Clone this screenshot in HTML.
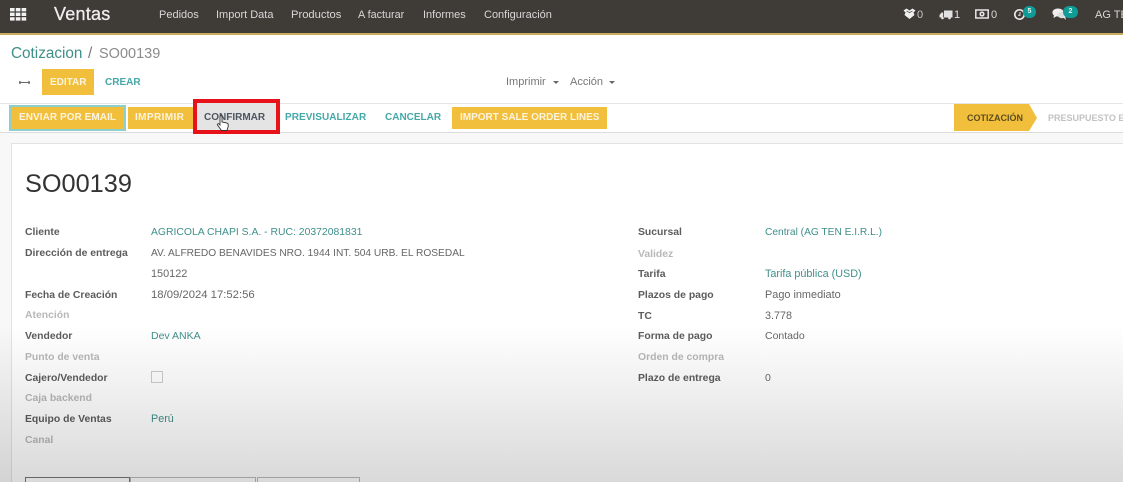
<!DOCTYPE html>
<html><head><meta charset="utf-8"><style>
html,body{margin:0;padding:0;width:1123px;height:482px;overflow:hidden}
#p{position:relative;width:1123px;height:482px;overflow:hidden;background:#fff;font-family:"Liberation Sans",sans-serif;font-size:11px;color:#555}
.a{position:absolute;white-space:nowrap;line-height:14px}
.n{color:#d8d8d8;top:7.5px;font-size:11px}
.l{left:25px;font-weight:bold;color:#5c5c5c;font-size:10.4px}
.t{color:#3f8f8a;font-size:10.5px}
.g{color:#666;font-size:10.5px}
.q{color:#b8b8b8!important}
.b{font-weight:bold;font-size:10px;color:#fdf4de}
.y{position:absolute;background:#f1bf3c}
.c{color:#45a8a8;font-weight:bold;font-size:10px}
.r{left:638px;font-weight:bold;color:#5c5c5c;font-size:10.4px}
.v{left:765px}
</style></head><body><div id="p">
<div class="a" style="left:0;top:0;width:1123px;height:33px;background:#3f3b37;border-bottom:2px solid #c9ab5e"></div>
<svg class="a" style="left:10px;top:8px" width="17" height="13"><g fill="#f2f2f2"><rect x="0" y="0" width="4.6" height="3.4"/><rect x="5.8" y="0" width="4.6" height="3.4"/><rect x="11.6" y="0" width="4.6" height="3.4"/><rect x="0" y="4.6" width="4.6" height="3.4"/><rect x="5.8" y="4.6" width="4.6" height="3.4"/><rect x="11.6" y="4.6" width="4.6" height="3.4"/><rect x="0" y="9.2" width="4.6" height="3.4"/><rect x="5.8" y="9.2" width="4.6" height="3.4"/><rect x="11.6" y="9.2" width="4.6" height="3.4"/></g></svg>
<div class="a" style="left:54px;top:4px;font-size:18px;line-height:20px;color:#eee;letter-spacing:.25px;-webkit-text-stroke:.3px #eee">Ventas</div>
<div class="a n" style="left:159px">Pedidos</div>
<div class="a n" style="left:216px">Import Data</div>
<div class="a n" style="left:291px;font-size:11.2px">Productos</div>
<div class="a n" style="left:358px;font-size:10.8px">A facturar</div>
<div class="a n" style="left:423px">Informes</div>
<div class="a n" style="left:484px">Configuración</div>

<svg class="a" style="left:903px;top:8px" width="13" height="12"><path d="M0.5 2.5 L3.5 0.5 L6.5 2.5 L9.5 0.5 L12.5 2.5 L10.5 4.5 L11.5 7 L6.5 11 L1.5 7 L2.5 4.5Z" fill="#efefef"/><path d="M3.5 3 L6.5 4.6 L9.5 3" stroke="#3f3b37" stroke-width=".7" fill="none"/></svg>
<div class="a n" style="left:917px;color:#c8c8c8">0</div>
<svg class="a" style="left:939px;top:9px" width="14" height="11"><path d="M5 1.5 H13.5 V8.5 H5Z M4.2 3.5 H2.5 L0.5 6 V8.5 H4.2Z" fill="#e2e2e2"/><circle cx="3.5" cy="9" r="1.3" fill="#e2e2e2"/><circle cx="10.5" cy="9" r="1.3" fill="#e2e2e2"/></svg>
<div class="a n" style="left:954px;color:#e2e2e2">1</div>
<svg class="a" style="left:975px;top:9px" width="14" height="10"><rect x=".8" y="1" width="12.4" height="8" fill="none" stroke="#e6e6e6" stroke-width="1.5"/><circle cx="7" cy="5" r="2.6" fill="#e6e6e6"/><circle cx="7" cy="5" r="1" fill="#3f3b37"/></svg>
<div class="a n" style="left:991px">0</div>
<svg class="a" style="left:1013px;top:7px" width="14" height="14"><circle cx="6.5" cy="7.5" r="4.7" fill="none" stroke="#e6e6e6" stroke-width="1.7"/><path d="M7 5 V8.3 H5" fill="none" stroke="#e6e6e6"/></svg>
<div class="a" style="left:1023px;top:6px;width:13px;height:12px;border-radius:6px;background:#0f9c96;color:#e8f5f4;font-size:7px;line-height:12px;text-align:center;font-weight:bold">5</div>
<svg class="a" style="left:1052px;top:7px" width="16" height="14"><ellipse cx="6" cy="5.5" rx="5.6" ry="4" fill="#eee"/><ellipse cx="10" cy="8" rx="4.5" ry="3.2" fill="#ddd"/><path d="M2 8 L1.5 11 L5 9Z M11 10 L14 13 L13 9Z" fill="#eee"/></svg>
<div class="a" style="left:1063px;top:6px;width:15px;height:12px;border-radius:6px;background:#0f9c96;color:#e8f5f4;font-size:7px;line-height:12px;text-align:center;font-weight:bold">2</div>
<div class="a n" style="left:1095px">AG TEN</div>

<div class="a" style="left:11px;top:45px;font-size:15.3px;line-height:18px;color:#3f8f8a">Cotizacion</div>
<div class="a" style="left:88px;top:45px;font-size:15.3px;line-height:18px;color:#777">/</div>
<div class="a" style="left:99px;top:45px;font-size:14.5px;line-height:18px;color:#8b8b8b">SO00139</div>

<svg class="a" style="left:19px;top:79px" width="11" height="7"><path d="M0 3.5 H11 M1.5 2 L0 3.5 L1.5 5 M9.5 2 L11 3.5 L9.5 5" stroke="#666" stroke-width="1" fill="none"/></svg>
<div class="y" style="left:42px;top:69px;width:52px;height:26px"></div>
<div class="a b" style="left:50px;top:76px">EDITAR</div>
<div class="a c" style="left:105px;top:76px">CREAR</div>
<div class="a" style="left:506px;top:75px;font-size:11px;color:#777">Imprimir</div>
<div class="a" style="left:553px;top:81px;border:3px solid transparent;border-top-color:#666;border-bottom:0"></div>
<div class="a" style="left:570px;top:75px;font-size:11px;color:#777">Acción</div>
<div class="a" style="left:609px;top:81px;border:3px solid transparent;border-top-color:#666;border-bottom:0"></div>

<div class="a" style="left:0;top:132px;width:1123px;height:350px;background:#f8f8f8"></div>
<div class="a" style="left:0;top:103px;width:1123px;height:28px;border-top:1px solid #e6e6e6;border-bottom:1px solid #dcdcdc;background:#fff"></div>

<div class="y" style="left:9px;top:105px;width:113px;height:22px;border:2px solid #8fcfcb"></div>
<div class="a b" style="left:19px;top:111px;letter-spacing:.06px">ENVIAR POR EMAIL</div>
<div class="y" style="left:128px;top:107px;width:65px;height:22px"></div>
<div class="a b" style="left:135px;top:111px;letter-spacing:.4px">IMPRIMIR</div>
<div class="a" style="left:193px;top:99px;width:87px;height:35px;box-sizing:border-box;border:4px solid #e8131a;background:#e4e4e4"></div>
<div class="a" style="left:204px;top:111px;font-size:10px;font-weight:bold;color:#4c5560">CONFIRMAR</div>
<svg class="a" style="left:216px;top:115px" width="14" height="17"><path d="M4 1.5 C4 .5 6 .5 6 1.5 V7 L11 8 C12.5 8.5 12.5 10 12 12 L11 15.5 H5.5 L1.5 10 C1 9 2.5 8 3.5 9.5 L4 10Z" fill="#fff" stroke="#333" stroke-width=".9"/></svg>
<div class="a c" style="left:285px;top:111px;letter-spacing:.05px">PREVISUALIZAR</div>
<div class="a c" style="left:385px;top:111px">CANCELAR</div>
<div class="y" style="left:452px;top:107px;width:155px;height:22px"></div>
<div class="a b" style="left:460px;top:111px">IMPORT SALE ORDER LINES</div>
<svg class="a" style="left:954px;top:104px" width="90" height="28"><path d="M0 0 H75 L83 14 L75 27 H0Z" fill="#f1bf3c"/></svg>
<div class="a" style="left:967px;top:111px;font-size:9px;font-weight:bold;color:#5d4c20">COTIZACIÓN</div>
<div class="a" style="left:1048px;top:111px;font-size:9px;font-weight:bold;color:#c2c2c2">PRESUPUESTO ENVIADO</div>

<div class="a" style="left:11px;top:143px;width:1130px;height:360px;background:#fff;border:1px solid #e2e2e2;box-sizing:border-box"></div>
<div class="a" style="left:25px;top:169px;font-size:25.3px;line-height:30px;color:#333">SO00139</div>

<div class="a l" style="top:226px">Cliente</div>
<div class="a t" style="left:151px;top:226px;font-size:10.4px">AGRICOLA CHAPI S.A. - RUC: 20372081831</div>
<div class="a l" style="top:247px">Dirección de entrega</div>
<div class="a g" style="left:151px;top:247px;font-size:10.2px">AV. ALFREDO BENAVIDES NRO. 1944 INT. 504 URB. EL ROSEDAL</div>
<div class="a g" style="left:151px;top:267px;font-size:10.9px">150122</div>
<div class="a l" style="top:289px">Fecha de Creación</div>
<div class="a g" style="left:151px;top:288px;font-size:11.3px">18/09/2024 17:52:56</div>
<div class="a l q" style="top:309px">Atención</div>
<div class="a l" style="top:330px">Vendedor</div>
<div class="a t" style="left:151px;top:329px">Dev ANKA</div>
<div class="a l q" style="top:351px">Punto de venta</div>
<div class="a l" style="top:372px">Cajero/Vendedor</div>
<div class="a" style="left:151px;top:371px;width:10px;height:10px;border:1px solid #ccc"></div>
<div class="a l q" style="top:392px">Caja backend</div>
<div class="a l" style="top:413px">Equipo de Ventas</div>
<div class="a t" style="left:151px;top:412px;font-size:10.8px">Perú</div>
<div class="a l q" style="top:434px">Canal</div>

<div class="a r" style="top:226px">Sucursal</div>
<div class="a t v" style="top:226px;font-size:10.2px">Central (AG TEN E.I.R.L.)</div>
<div class="a r q" style="top:248px">Validez</div>
<div class="a r" style="top:268px">Tarifa</div>
<div class="a t v" style="top:267px;font-size:10.8px">Tarifa pública (USD)</div>
<div class="a r" style="top:289px">Plazos de pago</div>
<div class="a g v" style="top:288px;font-size:10.9px">Pago inmediato</div>
<div class="a r" style="top:310px">TC</div>
<div class="a g v" style="top:309px;font-size:10.8px">3.778</div>
<div class="a r" style="top:330px">Forma de pago</div>
<div class="a g v" style="top:329px">Contado</div>
<div class="a r q" style="top:351px">Orden de compra</div>
<div class="a r" style="top:372px">Plazo de entrega</div>
<div class="a g v" style="top:371px">0</div>

<div class="a" style="left:25px;top:477px;width:103px;height:8px;border:1px solid #777;border-bottom:0"></div>
<div class="a" style="left:130px;top:477px;width:124px;height:8px;border:1px solid #bbb;border-bottom:0"></div>
<div class="a" style="left:257px;top:477px;width:101px;height:8px;border:1px solid #bbb;border-bottom:0"></div>

<div class="a" style="left:0;top:325px;width:1123px;height:157px;background:linear-gradient(to bottom,rgba(0,0,0,0),rgba(0,0,0,.15))"></div>
</div></body></html>
